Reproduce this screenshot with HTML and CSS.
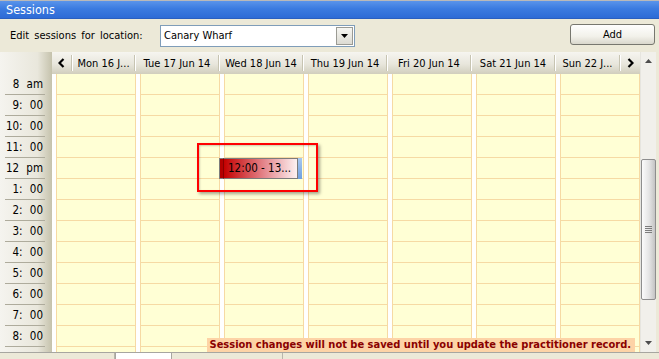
FILE: index.html
```html
<!DOCTYPE html>
<html>
<head>
  <title>Sessions</title>
  <link rel="stylesheet" href="styles.css">
</head>
<body>
  <div class="window">
    <div class="titlebar">Sessions</div>

    <div class="toolbar">
      <label class="loc-label" for="location">Edit sessions for location:</label>
      <div class="combo" id="location">
        <span class="combo-text">Canary Wharf</span>
        <span class="combo-btn">
          <svg width="7" height="4" viewBox="0 0 7 4"><path d="M0 0h7L3.5 4z" fill="#000"/></svg>
        </span>
      </div>
      <div class="spacer"></div>
      <button class="btn-add">Add</button>
    </div>

    <div class="calendar">
      <div class="time-col">
        <div class="time-head"></div>
        <div class="time-row">8 am</div>
        <div class="time-row">9: 00</div>
        <div class="time-row">10: 00</div>
        <div class="time-row">11: 00</div>
        <div class="time-row">12 pm</div>
        <div class="time-row">1: 00</div>
        <div class="time-row">2: 00</div>
        <div class="time-row">3: 00</div>
        <div class="time-row">4: 00</div>
        <div class="time-row">5: 00</div>
        <div class="time-row">6: 00</div>
        <div class="time-row">7: 00</div>
        <div class="time-row">8: 00</div>
        <div class="time-row"></div>
      </div>

      <div class="days">
        <div class="day-head">
          <div class="head-cell">
            <span class="nav">
              <svg width="7" height="10" viewBox="0 0 7 10"><path d="M5.5 1L1.5 5l4 4" fill="none" stroke="#000" stroke-width="2.2"/></svg>
            </span>
            <span class="sep"></span>
            <span class="head-text">Mon 16 J...</span>
            <span class="sep"></span>
          </div>
          <div class="head-cell"><span class="head-text">Tue 17 Jun 14</span><span class="sep"></span></div>
          <div class="head-cell"><span class="head-text">Wed 18 Jun 14</span><span class="sep"></span></div>
          <div class="head-cell"><span class="head-text">Thu 19 Jun 14</span><span class="sep"></span></div>
          <div class="head-cell"><span class="head-text">Fri 20 Jun 14</span><span class="sep"></span></div>
          <div class="head-cell"><span class="head-text">Sat 21 Jun 14</span><span class="sep"></span></div>
          <div class="head-cell">
            <span class="head-text">Sun 22 J...</span>
            <span class="sep"></span>
            <span class="nav">
              <svg width="7" height="10" viewBox="0 0 7 10"><path d="M1.5 1l4 4-4 4" fill="none" stroke="#000" stroke-width="2.2"/></svg>
            </span>
          </div>
        </div>

        <div class="day-body" id="dayBody"></div>

        <div class="event">
          <span class="event-bar"></span>
          <span class="event-main">12:00 - 13...</span>
          <span class="event-end"></span>
        </div>

        <div class="notice">Session changes will not be saved until you update the practitioner record.</div>
      </div>

      <div class="scrollbar">
        <div class="sb-btn">
          <svg width="7" height="4" viewBox="0 0 7 4"><path d="M0 4h7L3.5 0z" fill="#4d4d4d"/></svg>
        </div>
        <div class="sb-track">
          <div class="sb-thumb">
            <span class="grip"></span>
            <span class="grip"></span>
            <span class="grip"></span>
            <span class="grip"></span>
          </div>
        </div>
        <div class="sb-btn">
          <svg width="7" height="4" viewBox="0 0 7 4"><path d="M0 0h7L3.5 4z" fill="#4d4d4d"/></svg>
        </div>
      </div>
    </div>

    <div class="tabs">
      <span class="tab"></span>
      <span class="tab tab-active"></span>
      <span class="tab"></span>
    </div>

    <div class="highlight"></div>
  </div>

  <script>
    // build the week grid: 7 days x 14 rows (last one partly hidden)
    var body = document.getElementById('dayBody');
    for (var d = 0; d < 7; d++) {
      var col = document.createElement('div');
      col.className = 'day-col';
      var inner = document.createElement('div');
      inner.className = 'day-cells';
      for (var r = 0; r < 14; r++) {
        var cell = document.createElement('div');
        cell.className = 'cell';
        inner.appendChild(cell);
      }
      col.appendChild(inner);
      body.appendChild(col);
    }
  </script>
</body>
</html>
```

FILE: styles.css
```css
* {
  box-sizing: border-box;
}
body {
  margin: 0;
  font-family: "DejaVu Sans Condensed", "DejaVu Sans", sans-serif;
  font-size: 11px;
  color: #000;
  background: #ece9d8;
}
.window {
  position: relative;
  width: 659px;
  height: 359px;
  overflow: hidden;
  background: #ece9d8;
}
.titlebar {
  height: 19px;
  padding-left: 6px;
  line-height: 18px;
  font-size: 12.5px;
  color: #fff;
  border-top: 1px solid #b9b9b9;
  border-bottom: 1px solid #2a5fc0;
  background: linear-gradient(#5a94ea, #3b7be0 45%, #2d6bd6);
}
.toolbar {
  height: 33px;
  display: flex;
  align-items: center;
  padding: 0 4px 0 10px;
}
.loc-label {
  width: 150px;
  word-spacing: 2px;
}
.combo {
  width: 195px;
  height: 22px;
  display: flex;
  align-items: center;
  border: 1px solid #7f9db9;
  background: #fff;
  padding: 1px;
}
.combo-text {
  flex: 1;
  padding-left: 2px;
}
.combo-btn {
  width: 17px;
  height: 18px;
  display: flex;
  align-items: center;
  justify-content: center;
  border: 1px solid #9b9b94;
  background: linear-gradient(#f6f6f2, #dcdbd3);
}
.spacer {
  flex: 1;
}
.btn-add {
  width: 85px;
  height: 21px;
  margin-top: -2px;
  font-family: inherit;
  font-size: 11px;
  color: #000;
  border: 1px solid #77776f;
  border-radius: 3px;
  background: linear-gradient(#fefefe, #f2f1ea 60%, #d9d7cc);
  padding: 0;
}

.calendar {
  display: flex;
  height: 300px;
  padding-right: 3px;
}
.time-col {
  width: 52px;
  overflow: hidden;
  background: linear-gradient(to right, #f5f4ef, #e9e7dc 72%, #c5c2ac);
}
.time-head {
  height: 22px;
}
.time-row {
  height: 21px;
  margin: 0 7px 0 5px;
  padding-right: 2px;
  line-height: 21px;
  text-align: right;
  font-size: 11.5px;
  word-spacing: 4px;
  border-bottom: 1px solid #aeab9c;
}

.days {
  position: relative;
  width: 588px;
  overflow: hidden;
  background: #fff;
}
.day-head {
  display: flex;
  height: 22px;
  background: linear-gradient(#f6f5f0, #e8e6dc 55%, #d1cebd);
}
.head-cell {
  width: 84px;
  display: flex;
  align-items: center;
}
.head-text {
  flex: 1;
  text-align: center;
  white-space: nowrap;
  overflow: hidden;
}
.sep {
  width: 2px;
  height: 16px;
  border-left: 1px solid #c7c4b2;
  border-right: 1px solid #fff;
}
.nav {
  width: 19px;
  display: flex;
  align-items: center;
  justify-content: center;
}
.day-body {
  display: flex;
}
.day-col {
  width: 84px;
  padding-left: 4px;
}
.day-cells {
  border-left: 1px solid #f6daa4;
  border-right: 1px solid #f6daa4;
  background: #ffffd5;
}
.cell {
  height: 21px;
  border-bottom: 1px solid #f6daa4;
}

.event {
  position: absolute;
  left: 167px;
  top: 106px;
  width: 83px;
  height: 21px;
  display: flex;
}
.event-bar {
  width: 5px;
  background: #b40000;
  border: 1px solid #7c7c7c;
  border-right: 1px solid #8a0000;
}
.event-main {
  width: 74px;
  padding-left: 4px;
  line-height: 19px;
  font-size: 11.5px;
  white-space: nowrap;
  border: 1px solid #7c7c7c;
  border-left: none;
  background: linear-gradient(to right, #c40000, #e4868c 55%, #fdf2f2);
}
.event-end {
  width: 4px;
  background: linear-gradient(#a9c8f0, #6f9fe0);
}

.notice {
  position: absolute;
  right: 5px;
  bottom: 0;
  height: 14px;
  padding: 0 4px 0 3px;
  line-height: 14px;
  font-weight: bold;
  font-size: 11px;
  color: #8a0000;
  background: #fdd3a6;
  white-space: nowrap;
}

.scrollbar {
  width: 16px;
  display: flex;
  flex-direction: column;
  background: #f1f0eb;
  border-left: 1px solid #e6e5df;
}
.sb-btn {
  height: 18px;
  display: flex;
  align-items: center;
  justify-content: center;
}
.sb-track {
  flex: 1;
}
.sb-thumb {
  height: 141px;
  margin-top: 89px;
  display: flex;
  flex-direction: column;
  align-items: center;
  justify-content: center;
  gap: 1px;
  border: 1px solid #8e8e8e;
  border-radius: 2px;
  background: linear-gradient(to right, #fbfbfb, #e4e4e4 55%, #c4c4c4);
}
.grip {
  width: 7px;
  height: 1px;
  background: #7c7c7c;
}

.tabs {
  height: 7px;
  display: flex;
  border-top: 1px solid #a7a6a0;
  padding-left: 4px;
}
.tab {
  width: 111px;
  border-right: 1px solid #b8b6ab;
}
.tab-active {
  width: 57px;
  background: #fff;
  border-left: 1px solid #a7a6a0;
  border-right: 1px solid #a7a6a0;
}

.highlight {
  position: absolute;
  left: 197px;
  top: 143px;
  width: 121px;
  height: 49px;
  border: 2px solid #f00;
  box-shadow: 2px 2px 3px rgba(0, 0, 0, 0.35), inset 1px 1px 2px rgba(0, 0, 0, 0.2);
}
```
